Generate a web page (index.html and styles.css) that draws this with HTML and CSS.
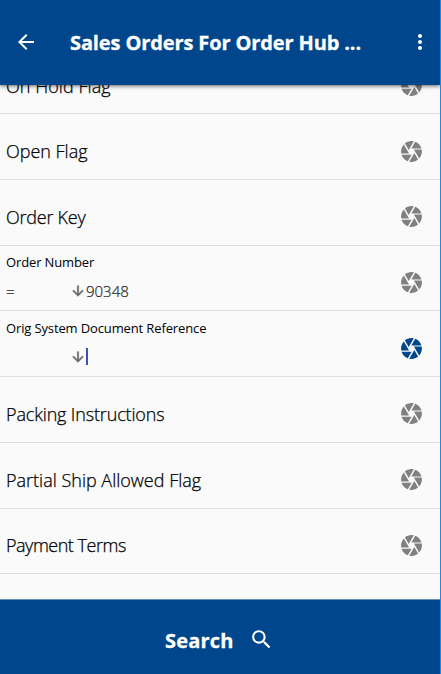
FILE: index.html
```html
<!DOCTYPE html>
<html lang="en">
<head>
<meta charset="utf-8">
<title>Sales Orders</title>
<link rel="stylesheet" href="styles.css">
</head>
<body>
<svg class="defs" aria-hidden="true">
<symbol id="shutter" viewBox="0 0 24 24"><path d="M9.4 10.5l4.77-8.26C13.47 2.09 12.75 2 12 2c-2.4 0-4.6.85-6.32 2.25l3.66 6.35.06-.1zM21.54 9c-.92-2.92-3.15-5.26-6-6.34L11.88 9h9.66zm.26 1h-7.49l.29.5 4.76 8.25C21 16.97 22 14.61 22 12c0-.69-.07-1.35-.2-2zM8.54 12l-3.9-6.75C3.01 7.03 2 9.39 2 12c0 .69.07 1.35.2 2h7.49l-1.15-2zm-6.08 3c.92 2.92 3.15 5.26 6 6.34L12.12 15H2.46zm11.27 0l-3.9 6.76c.7.15 1.42.24 2.17.24 2.4 0 4.6-.85 6.32-2.25l-3.66-6.35-.93 1.6z"/></symbol>
<symbol id="down" viewBox="0 0 24 24"><path d="M20 12l-1.41-1.41L13 16.17V4h-2v12.17l-5.58-5.59L4 12l8 8 8-8z"/></symbol>
</svg>
<div class="app">
<header class="bar">
<svg class="back" viewBox="0 0 24 24"><path d="M20 11H7.83l5.59-5.59L12 4l-8 8 8 8 1.41-1.41L7.83 13H20v-2z"/></svg>
<h1 class="title">Sales Orders For Order Hub ...</h1>
<svg class="more" viewBox="0 0 24 24"><path d="M12 8c1.100 0 2-.9 2-2s-.9-2-2-2-2 .9-2 2 .9 2 2 2zm0 2c-1.100 0-2 .9-2 2s.9 2 2 2 2-.9 2-2-.9-2-2-2zm0 6c-1.100 0-2 .9-2 2s.9 2 2 2 2-.9 2-2-.9-2-2-2z"/></svg>
</header>
<main class="viewport">
<div class="list">
<div class="row"><span class="label hold">On Hold Flag</span><svg class="cam"><use href="#shutter"/></svg></div>
<div class="row"><span class="label">Open Flag</span><svg class="cam"><use href="#shutter"/></svg></div>
<div class="row"><span class="label key">Order Key</span><svg class="cam"><use href="#shutter"/></svg></div>
<div class="row"><div class="field"><span class="caption">Order Number</span><div class="entry"><span class="operator">=</span><svg class="down"><use href="#down"/></svg><span class="value">90348</span></div></div><svg class="cam"><use href="#shutter"/></svg></div>
<div class="row"><div class="field"><span class="caption">Orig System Document Reference</span><div class="entry"><span class="operator"></span><svg class="down"><use href="#down"/></svg><span class="caret"></span></div></div><svg class="cam active"><use href="#shutter"/></svg></div>
<div class="row"><span class="label packing">Packing Instructions</span><svg class="cam"><use href="#shutter"/></svg></div>
<div class="row"><span class="label partial">Partial Ship Allowed Flag</span><svg class="cam"><use href="#shutter"/></svg></div>
<div class="row"><span class="label payment">Payment Terms</span><svg class="cam"><use href="#shutter"/></svg></div>
</div>
</main>
<footer class="search"><span class="search-label">Search</span><svg class="glass" viewBox="0 0 24 24"><path d="M15.500 14h-.79l-.28-.27C15.410 12.590 16 11.110 16 9.500 16 5.910 13.090 3 9.500 3S3 5.910 3 9.500 5.910 16 9.500 16c1.610 0 3.090-.59 4.230-1.570l.27.28v.79l5 4.990L20.490 19l-4.990-5zm-6 0C7.010 14 5 11.990 5 9.500S7.010 5 9.500 5 14 7.010 14 9.500 11.990 14 9.500 14z"/></svg></footer>
</div>
</body>
</html>
```
FILE: styles.css
```css
* { box-sizing: border-box; }
body { margin: 0; font-family: "Open Sans", "Noto Sans", sans-serif; color: #000; }
.defs { display: none; }
.app { width: 441px; height: 674px; display: flex; flex-direction: column; background: #fafafa; border-right: 1px solid #2588dc; overflow: hidden; }
.bar { flex: 0 0 85px; display: flex; align-items: center; background: #00468c; color: #fff; box-shadow: 0 1px 4px rgba(0,0,0,.6); z-index: 1; }
.bar svg { margin-top: -1px; }
.back { width: 24px; height: 24px; margin-left: 14px; fill: currentColor; }
.title { flex: 1; margin: 0 0 0 32px; font-size: 20px; line-height: 28px; font-weight: 700; letter-spacing: -.12px; -webkit-text-stroke: .3px; white-space: nowrap; }
.more { width: 24px; height: 24px; margin-right: 8px; fill: currentColor; }
.viewport { flex: 1; overflow: hidden; }
.list { margin-top: -36.300px; }
.row { height: 65.7px; display: flex; justify-content: space-between; align-items: center; padding: 9px 16px 0 6px; border-bottom: 1px solid #dedede; }
.label { font-size: 18px; line-height: 24px; font-weight: 300; letter-spacing: -.02px; -webkit-text-stroke: .25px; white-space: nowrap; }
.hold { letter-spacing: .05px; }
.key { letter-spacing: -.24px; }
.packing { letter-spacing: -.15px; }
.partial { letter-spacing: 0; }
.payment { letter-spacing: -.48px; }
.cam { width: 25px; height: 25px; fill: #808080; }
.active { fill: #00468c; }
.field { align-self: flex-start; margin-top: -2.800px; }
.caption { display: block; font-size: 13px; line-height: 20px; letter-spacing: -.13px; white-space: nowrap; }
.entry { display: flex; align-items: center; height: 20px; margin-top: 9px; color: #222; font-size: 15px; font-weight: 300; -webkit-text-stroke: .2px; }
.operator { width: 64px; }
.down { width: 16px; height: 16px; fill: #666; stroke: #666; stroke-width: .8px; }
.caret { width: 2px; height: 17px; background: #3f51b5; }
.search { flex: 0 0 75px; display: flex; align-items: center; padding: 8px 0 0 165px; background: #00468c; color: #fff; border-top: 1px solid #668fb5; }
.search-label { font-size: 20px; line-height: 28px; font-weight: 700; letter-spacing: .2px; -webkit-text-stroke: .3px; }
.glass { width: 25px; height: 25px; margin: -4px 0 0 15px; fill: currentColor; }
```
